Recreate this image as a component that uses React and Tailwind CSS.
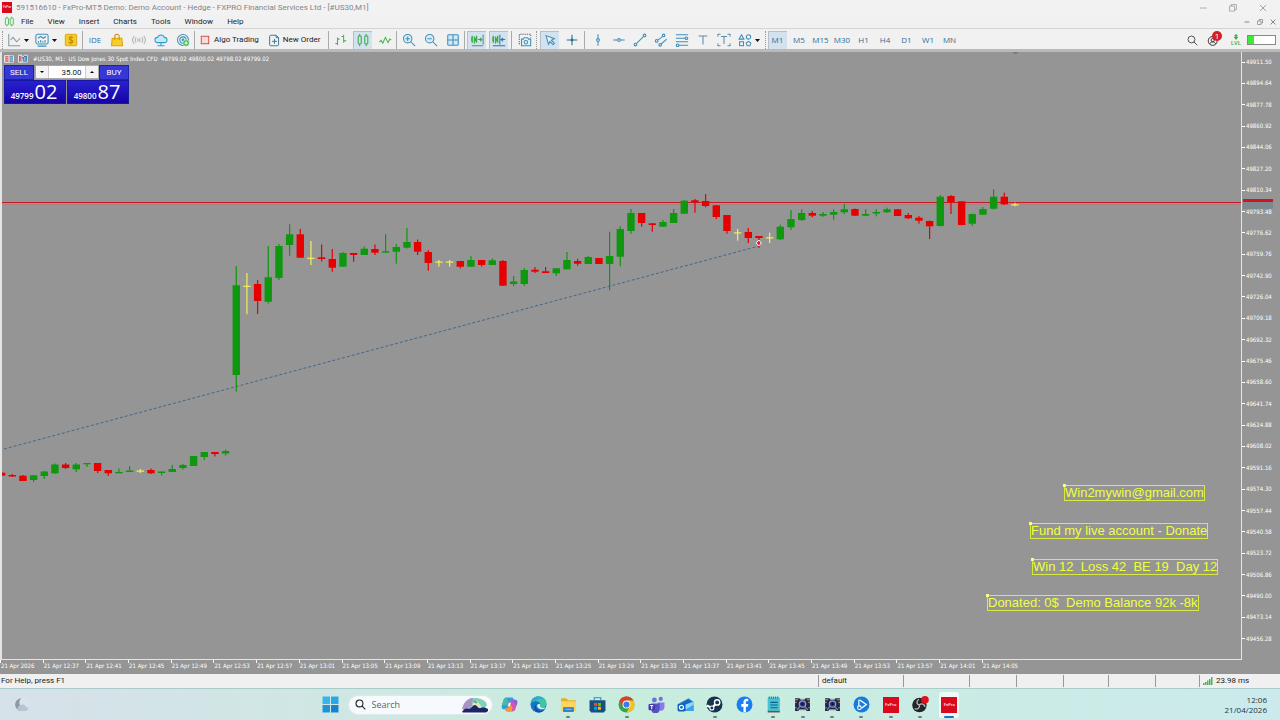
import React from "react";

const GREEN = "#0f970f";
const RED = "#e60000";
const YELLOW = "#efef5a";

// kind, high, body top, body bottom, low
const candles = [
  ["r", 472, 472.7, 475.7, 476], ["r", 474, 475, 476.5, 477], ["r", 475, 475.7, 481, 481],
  ["g", 475, 475.3, 480, 482], ["g", 471, 471.5, 476, 479], ["g", 463.5, 464.5, 473.3, 474],
  ["r", 463, 464.5, 468, 469], ["g", 463, 464.5, 469.3, 472], ["g", 463, 463, 464.3, 467],
  ["r", 463, 463, 471, 473], ["r", 470, 470, 473.3, 476], ["g", 468.5, 472, 473.3, 473],
  ["g", 466, 470.5, 472, 472], ["y", 469, 470.5, 471, 473], ["r", 468.5, 470, 473.3, 474],
  ["g", 471.5, 471.5, 473, 475.5], ["g", 465, 469, 472, 472], ["g", 464, 465, 468, 469.5],
  ["g", 456, 456, 466, 466], ["g", 452, 452, 457, 460], ["r", 452, 452, 454, 456.5],
  ["g", 449.5, 451, 453.5, 455.5], ["g", 266, 285.3, 375, 391.7], ["y", 273, 285.7, 286, 314.3],
  ["r", 280, 284, 301, 314], ["g", 246, 277.3, 301.7, 303.5], ["g", 244, 246, 278, 280],
  ["g", 224.3, 234.3, 245, 255.7], ["r", 229, 234.3, 257.7, 258], ["y", 241, 257.7, 258, 265],
  ["r", 244.5, 257.3, 259, 261.5], ["r", 249, 259, 267.7, 271.7], ["g", 252, 253, 266.7, 266.7],
  ["r", 253, 253, 255, 261.7], ["g", 246.5, 248.7, 255, 255], ["r", 244.5, 249, 252.7, 255],
  ["g", 234.3, 251.3, 252.7, 252.7], ["g", 244, 247, 251.7, 263.7], ["g", 228, 242, 247.7, 248.5],
  ["r", 239.5, 242, 251.7, 255], ["r", 250, 252, 263, 270.7], ["y", 260, 261.5, 262, 266.7],
  ["y", 260, 261.5, 262, 266.7], ["r", 261, 261, 266.7, 268.3], ["g", 256, 260, 266.7, 266.7],
  ["r", 260, 260, 265, 266.7], ["g", 258.5, 260.3, 265, 265], ["r", 260, 261, 285.7, 286],
  ["g", 276, 281.5, 284, 286], ["g", 268, 270, 284, 286], ["r", 267, 269.7, 271.7, 273],
  ["r", 267, 271.3, 273, 273], ["g", 268, 268.3, 273.3, 276], ["g", 252, 260, 269.3, 269.3],
  ["r", 258.7, 261, 263.7, 265.7], ["g", 256, 257, 264, 264], ["r", 258, 258, 264, 264],
  ["g", 231.7, 256, 264, 290.3], ["g", 226.3, 229, 256.7, 266.3], ["g", 209, 213, 231, 233.7],
  ["r", 213, 213, 223, 226.7], ["r", 223, 223.3, 225, 231.7], ["g", 220, 222, 226.7, 226.7],
  ["g", 209, 213, 223, 223], ["g", 200, 200.7, 213.7, 214], ["r", 199, 200.3, 202, 212.7],
  ["r", 194, 201, 206, 207.3], ["r", 205, 205.3, 217, 219], ["r", 215, 215, 231, 233.7],
  ["y", 229, 232.3, 233, 240.7], ["r", 228, 232, 238, 243], ["r", 236, 236, 238, 248],
  ["y", 232.7, 237.3, 238, 243], ["g", 224.7, 226.7, 239.3, 240], ["g", 210, 219, 227.3, 230],
  ["g", 209.3, 213, 220, 221], ["r", 211, 213, 215.7, 217.3], ["g", 212, 214, 215.7, 217],
  ["g", 209.3, 212, 214.7, 219.7], ["g", 204, 209.3, 212.3, 214], ["r", 208.5, 209, 215.7, 216],
  ["g", 209.3, 214, 215.7, 216], ["g", 209.3, 212, 213.5, 216.3], ["g", 207.7, 209.3, 212.3, 213],
  ["r", 209, 209.3, 216, 216], ["r", 213, 215, 218.3, 219], ["r", 216, 217.7, 220.7, 223.7],
  ["r", 220.5, 221, 226.3, 239], ["g", 195, 196.7, 226, 226.5], ["r", 195, 196, 202, 214],
  ["r", 201, 201.3, 225, 225.5], ["g", 213.5, 214, 223.7, 226], ["g", 207, 209, 214.7, 215],
  ["g", 189.3, 196.7, 208.7, 209.5], ["r", 192.7, 196.7, 204.3, 205], ["y", 202.7, 204.3, 205, 206.3],
];

const prices = Array.from({ length: 28 }, (_, i) => (49911.5 - i * 16.86).toFixed(2));
const times = Array.from({ length: 24 }, (_, i) => {
  if (i === 0) return "21 Apr 2026";
  const m = 12 * 60 + 33 + i * 4;
  return `21 Apr ${Math.floor(m / 60)}:${String(m % 60).padStart(2, "0")}`;
});

function Ic({ children, className = "h-[14px] w-[14px]", color = "#3f8fba" }) {
  return (
    <svg viewBox="0 0 16 16" fill="none" stroke={color} strokeWidth="1.2" className={`${className} shrink-0`} aria-hidden="true">
      {children}
    </svg>
  );
}

function Tool({ label, active, children }) {
  return (
    <button
      type="button"
      aria-label={label}
      className={`flex h-[18px] w-[19px] items-center justify-center ${active ? "bg-[#d3e2ee] shadow-[inset_1px_1px_0_#b4bfc8]" : ""}`}
    >
      {children}
    </button>
  );
}

function DropTool({ label, children }) {
  return (
    <button type="button" aria-label={label} className="flex h-[18px] w-[25px] items-center justify-center gap-[3px]">
      {children}
      <svg viewBox="0 0 5 3" className="h-[3px] w-[5px] shrink-0" aria-hidden="true"><path d="M0 0h5L2.5 3z" fill="#111" /></svg>
    </button>
  );
}

function Sep({ wide }) {
  return <div className={`flex justify-center ${wide ? "w-[7px]" : "w-[5px]"}`}><div className="h-[18px] w-px bg-[#aaa]" /></div>;
}

function Dots() {
  return <div className="flex w-[5px] justify-center"><div className="h-[18px] border-l border-dotted border-[#999]" /></div>;
}

function FxLogo({ className }) {
  return (
    <span className={`flex items-center justify-center bg-[#d90a1c] font-bold text-[#ffd5d8] ${className}`}>FxPro</span>
  );
}

function TitleBar() {
  return (
    <header className="flex h-[15px] items-center bg-[#f2f2f2] font-[Roboto,sans-serif] text-[8px] text-[#858585]">
      <FxLogo className="mx-[2px] h-[11px] w-[10px] text-[3px]" />
      <h1 className="ml-[2px] flex-1 whitespace-nowrap">591516610 - FxPro-MT5 Demo: Demo Account - Hedge - FXPRO Financial Services Ltd - [#US30,M1]</h1>
      <div className="flex gap-[20px] pr-[12px]">
        <button type="button" aria-label="Minimize"><Ic color="#999" className="h-[10px] w-[10px]"><path d="M3 8h11" /></Ic></button>
        <button type="button" aria-label="Restore"><Ic color="#999" className="h-[10px] w-[10px]"><path d="M2.500 5h8v8h-8zM5 5V2.500h8.500v8H10.500" /></Ic></button>
        <button type="button" aria-label="Close"><Ic color="#888" className="h-[10px] w-[10px]"><path d="M3 3l10 10M13 3L3 13" /></Ic></button>
      </div>
    </header>
  );
}

function MenuBar() {
  return (
    <nav className="flex h-[14px] items-center border-b border-[#d4d4d4] bg-[#f1f1f1] font-[Roboto,sans-serif] text-[8px] text-[#1c1c1c]">
      <Ic color="#3bb54a" className="ml-[4px] h-[11px] w-[11px]"><rect x="2" y="3" width="4.500" height="10" rx="1" /><rect x="9" y="3" width="4.500" height="10" rx="1" /><path d="M4.200 1v2M4.200 13v2M11.200 1v2M11.200 13v2" /></Ic>
      <div className="ml-[6px] flex flex-1 gap-[14px]">
        {["File", "View", "Insert", "Charts", "Tools", "Window", "Help"].map((m) => <button type="button" key={m}>{m}</button>)}
      </div>
      <div className="flex gap-[5px] pr-[3px]">
        <button type="button" aria-label="Minimize chart"><Ic color="#888" className="h-[8px] w-[8px]"><path d="M3 8h10" strokeWidth="2" /></Ic></button>
        <button type="button" aria-label="Restore chart"><Ic color="#888" className="h-[8px] w-[8px]"><path d="M3 6h7v7H3zM6 6V3h7v7h-3" strokeWidth="1.500" /></Ic></button>
        <button type="button" aria-label="Close chart"><Ic color="#666" className="h-[8px] w-[8px]"><path d="M3 3l10 10M13 3L3 13" strokeWidth="1.500" /></Ic></button>
      </div>
    </nav>
  );
}

function Toolbar() {
  return (
    <div className="flex h-[20px] items-center bg-[#f1f1f1] pt-[2px] text-[8px] text-[#222]">
      <Dots />
      <div className="flex w-[75px] justify-between">
        <DropTool label="Chart type"><Ic color="#8397a3"><path d="M2 1v13.500h13M4 8l3-3 4 5 4-4" /></Ic></DropTool>
        <DropTool label="Templates"><Ic><rect x="1" y="1.500" width="14" height="11" rx="2" /><path d="M3 15h10M3.500 6l3-2 3 2 3-2M4 9v2M6.500 8v3M9 9v2M11.500 8v3" /></Ic></DropTool>
        <Tool label="Market watch"><Ic color="#b98a00"><rect x="1.500" y="1.500" width="13" height="13" rx="1.500" fill="#f6c928" stroke="#e0ac10" /><path d="M10.500 5.500C9.500 4 5.500 4.300 5.800 6.500 6 8.500 10.300 7.500 10.300 9.800 10.300 12 6 12 5.300 10.300M8 3v10" /></Ic></Tool>
      </div>
      <Sep />
      <div className="flex w-[107px] items-center justify-between">
        <button type="button" className="w-[20px] text-[#2f6f98]">IDE</button>
        <Tool label="Market"><Ic><path d="M2.500 6h11l.8 8.500H1.700z" fill="#f7cd2e" stroke="#dba400" /><path d="M5.500 8V4a2.500 2.500 0 015 0v4" stroke="#c79308" /></Ic></Tool>
        <Tool label="Signals"><Ic color="#b5b5b5"><circle cx="8" cy="8" r="1.500" /><path d="M5 5a4 4 0 000 6M11 5a4 4 0 010 6M2.500 3.500a7 7 0 000 9M13.500 3.500a7 7 0 010 9" /></Ic></Tool>
        <Tool label="Virtual hosting"><Ic color="#2c9ccc"><path d="M4 11a3 3 0 01.2-6 4 4 0 017.600 0A3 3 0 0112 11zM8 11v3M4 14.500h8" fill="#c7eaf6" /></Ic></Tool>
        <Tool label="Community"><Ic><circle cx="8" cy="8" r="6.300" /><circle cx="8" cy="8" r="3.600" /><circle cx="8" cy="8" r="1" /><circle cx="11.500" cy="11.500" r="3.700" fill="#34bb4b" stroke="#fff" strokeWidth=".6" /><path d="M11.500 9.500v4M9.500 11.500h4" stroke="#fff" /></Ic></Tool>
      </div>
      <Sep />
      <div className="flex w-[129px] items-center gap-[9px] pl-[2px] font-[Roboto,sans-serif]">
        <button type="button" className="flex items-center gap-[3px] whitespace-nowrap"><Ic color="#cf4343" className="h-[12px] w-[12px]"><rect x="3" y="3" width="10" height="10" fill="#f8dada" /></Ic>Algo Trading</button>
        <button type="button" className="flex items-center gap-[2px] whitespace-nowrap"><Ic color="#3f7897" className="h-[13px] w-[13px]"><path d="M3 1.500h7l3 3v9l-1 1H3l-1-1v-11zM10 1.500v3h3M8 6v6M5 9h6" /></Ic>New Order</button>
      </div>
      <Sep />
      <div className="flex w-[63px] justify-between">
        <Tool label="Bars"><Ic color="#42b94f"><path d="M4 5v9M1.500 12H4M4 7h2.500M11 2v9M8.500 4H11M11 9h3" /></Ic></Tool>
        <Tool label="Candles" active><Ic color="#36ad46"><rect x="2.500" y="3.500" width="3.500" height="9" rx="1" /><rect x="10" y="3.500" width="3.500" height="9" rx="1" /><path d="M4.200 1v2.500M4.200 12.500V15M11.700 1v2.500M11.700 12.500V15" /></Ic></Tool>
        <Tool label="Line"><Ic color="#42b94f"><path d="M1.500 10.500l2-2 2 3L8.500 5l3 6 2-4 1.500 1" /></Ic></Tool>
      </div>
      <Sep />
      <div className="flex w-[63px] justify-between">
        <Tool label="Zoom in"><Ic><circle cx="6.500" cy="6.500" r="4.800" fill="#d8ecf6" /><path d="M10 10l5 5M6.500 4v5M4 6.500h5" /></Ic></Tool>
        <Tool label="Zoom out"><Ic><circle cx="6.500" cy="6.500" r="4.800" fill="#d8ecf6" /><path d="M10 10l5 5M4 6.500h5" /></Ic></Tool>
        <Tool label="Tile windows"><Ic><rect x="2" y="2" width="12" height="12" rx="1" fill="#d1e8f5" /><path d="M8 2v12M2 8h12" /></Ic></Tool>
      </div>
      <Sep />
      <div className="flex w-[41px] justify-between">
        <Tool label="Auto scroll" active><Ic color="#36ad46"><path d="M2.500 3v8M5 4v8M7.500 3v8M2 5v4M5.500 6v4M7 5v4" strokeWidth="1.500" /><path d="M9 7.500h4M11.500 5.500l2 2-2 2" /><path d="M15 2v11M2 14.500h13" stroke="#5289aa" /></Ic></Tool>
        <Tool label="Chart shift" active><Ic color="#36ad46"><path d="M1.500 3v8M4 4v8M6.500 3v8M1 5v4M4.500 6v4M6 5v4" strokeWidth="1.500" /><path d="M9 2v11M11 7.500h4M12.500 5.500l-2 2 2 2M1 14.500h14" stroke="#2f75a5" /></Ic></Tool>
      </div>
      <Sep wide />
      <Tool label="Screenshot"><Ic><path d="M1.500 13V1.500h13V5" strokeDasharray="1.500 1" stroke="#667" /><path d="M4 7h2l1-1.500h4L12 7h2.500v7.500H4z" fill="#e3f1f8" /><circle cx="9" cy="10.500" r="2" /></Ic></Tool>
      <Dots />
      <div className="flex w-[42px] justify-between pl-[1px]">
        <Tool label="Cursor" active><Ic><path d="M3.500 3l9.500 3.500-3.500 1.700 3.500 3.600-1.500 1.500-3.500-3.600L6.300 13z" fill="#e7f3fa" /></Ic></Tool>
        <Tool label="Crosshair"><Ic color="#286d93"><path d="M8 2v12M2 8h12" /><circle cx="8" cy="8" r="1" /></Ic></Tool>
      </div>
      <Sep wide />
      <div className="flex w-[146px] justify-between">
        <Tool label="Vertical line"><Ic><path d="M8 1.500v13" /><circle cx="8" cy="8" r="1.600" fill="#d8ecf6" /></Ic></Tool>
        <Tool label="Horizontal line"><Ic><path d="M1.500 8h13" /><circle cx="8" cy="8" r="1.600" fill="#d8ecf6" /></Ic></Tool>
        <Tool label="Trendline"><Ic><path d="M3 13L13 3" /><circle cx="2.800" cy="13.200" r="1.500" fill="#eee" /><circle cx="13.200" cy="2.800" r="1.500" fill="#eee" /></Ic></Tool>
        <Tool label="Channel"><Ic><path d="M2.500 9.500L11 3M6.500 14L14.500 7" /><circle cx="3" cy="9" r="1.500" fill="#eee" /><circle cx="11" cy="2.800" r="1.500" fill="#eee" /><circle cx="7" cy="13.500" r="1.500" fill="#eee" /></Ic></Tool>
        <Tool label="Fibonacci"><Ic><path d="M1 2h14M1 6h14M1 10h14M1 14h14" /><circle cx="13" cy="6" r="1.500" fill="#eee" /><circle cx="3" cy="14" r="1.500" fill="#eee" /></Ic></Tool>
        <Tool label="Text"><Ic color="#5f8ea6"><path d="M3 3.500h10M8 3.500V13" /></Ic></Tool>
        <Tool label="Text label"><Ic color="#5f8ea6"><path d="M4.500 4h7M8 4v8.500M1 4V1.500h3M12 1.500h3V4M1 12v2.500h3M15 12v2.500h-3" /></Ic></Tool>
      </div>
      <div className="flex w-[29px] justify-center"><DropTool label="Shapes"><Ic><path d="M4 2l2.800 5H1.200z" /><circle cx="12" cy="4.500" r="2.500" /><rect x="1.800" y="10" width="4.500" height="4.500" /><path d="M12 9.500l2.600 2-1 3h-3.200l-1-3z" /></Ic></DropTool></div>
      <Dots />
      <div className="flex w-[191px] justify-between text-[#2f6f98]">
        {["M1", "M5", "M15", "M30", "H1", "H4", "D1", "W1", "MN"].map((p) => (
          <button type="button" key={p} className={`flex h-[18px] w-[19px] items-center justify-center ${p === "M1" ? "bg-[#d3e2ee] shadow-[inset_1px_1px_0_#b4bfc8]" : ""}`}>{p}</button>
        ))}
      </div>
      <div className="ml-auto flex items-center gap-[9px] pr-[4px]">
        <button type="button" aria-label="Search"><Ic color="#333" className="h-[11px] w-[11px]"><circle cx="6.500" cy="6.500" r="5" /><path d="M10 10l5 5" /></Ic></button>
        <button type="button" aria-label="Account" className="relative">
          <Ic color="#333" className="h-[13px] w-[13px]"><circle cx="7" cy="8.500" r="5.500" /><circle cx="7" cy="7.500" r="2" /><path d="M3.500 12c1-3 6-3 7 0" /></Ic>
          <span className="absolute -top-[3px] left-[5px] flex h-[10px] w-[10px] items-center justify-center rounded-full bg-[#d32020] text-[8px] text-white">1</span>
        </button>
        <span className="flex w-[14px] flex-col items-center text-[6px] font-semibold leading-[6px] text-[#35b04a]">
          <svg viewBox="0 0 8 8" className="h-[6px] w-[6px]" aria-hidden="true"><path d="M4 0l3 3H5v1h2L4 8 1 4h2V3H1z" fill="#35b04a" /></svg>LVL
        </span>
        <span className="-ml-[5px] flex h-[10px] w-[29px] border border-[#888] bg-white"><span className="w-[6px] bg-[#3be83b]" /></span>
      </div>
    </div>
  );
}

function PlotDrawing() {
  return (
    <svg viewBox="2 52 1239 607" preserveAspectRatio="xMinYMin meet" className="absolute inset-0 h-full w-full" role="img" aria-label="US30 candlestick chart">
      <path d="M4 449L759 246" stroke="#41688c" strokeWidth="1" strokeDasharray="3 2" />
      <path d="M0 204.500H1241" stroke="#a88484" strokeWidth="1" />
      <path d="M0 202.500H1241" stroke="#c21d26" strokeWidth="1" />
      {candles.map(([k, hi, top, bot, lo], i) => {
        const x = 1.5 + i * 10.667;
        const c = k === "g" ? GREEN : k === "r" ? RED : YELLOW;
        const h = Math.max(bot - top, 1.2);
        return (
          <g key={i} fill={c}>
            <rect x={x - 0.5} y={hi} width="1.200" height={Math.max(lo - hi, 1)} />
            <rect x={x - 3.6} y={top} width="7.400" height={h} />
          </g>
        );
      })}
      <path d="M758.800 240l2.500 3-2.500 3-2.500-3z" fill="#e01616" stroke="#fff" />
      <path d="M1012 52h7l-3.500 2.500z" fill="#7b7b7b" />
    </svg>
  );
}

function OneClick() {
  const side = "h-[15px] w-[30px] border border-[#2020b0] bg-[#3737d6] font-[Roboto,sans-serif] text-[8px] text-white";
  const price = "flex h-[24px] w-[62px] items-end justify-center gap-px border border-[#1818a0] bg-linear-to-b from-[#2a1fd0] to-[#1503a4] pb-[3px] pr-[2px] text-white";
  return (
    <form className="relative ml-[2px] mt-[2px] flex w-[125px] flex-col" onSubmit={(e) => e.preventDefault()}>
      <div className="flex justify-between">
        <button type="button" className={side}>SELL</button>
        <div className="flex h-[14px] w-[64px] items-center border border-[#aaa] bg-white">
          <button type="button" aria-label="Decrease volume" className="flex h-full w-[12px] items-center justify-center bg-[#f4f4f4]"><svg viewBox="0 0 4 2" className="h-[2px] w-[4px]"><path d="M0 0h4L2 2z" /></svg></button>
          <input aria-label="Volume" defaultValue="35.00" className="h-full w-[38px] border-x border-[#ccc] pr-[3px] text-right font-[Roboto,sans-serif] text-[8px] text-[#222]" />
          <button type="button" aria-label="Increase volume" className="flex h-full w-[12px] items-center justify-center bg-[#f4f4f4]"><svg viewBox="0 0 4 2" className="h-[2px] w-[4px]"><path d="M0 2h4L2 0z" /></svg></button>
        </div>
        <button type="button" className={side}>BUY</button>
      </div>
      <div className="flex justify-between">
        <button type="button" className={price}><span className="text-[8px] font-semibold">49799</span><span className="text-[20px] leading-[16px]">02</span></button>
        <button type="button" className={price}><span className="text-[8px] font-semibold">49800</span><span className="text-[20px] leading-[16px]">87</span></button>
      </div>
    </form>
  );
}

const notes = [
  ["Win2mywin@gmail.com", "left-[1062px] top-[433px]"],
  ["Fund my live account - Donate", "left-[1028px] top-[471px]"],
  ["Win 12  Loss 42  BE 19  Day 12", "left-[1030px] top-[507px]"],
  ["Donated: 0$  Demo Balance 92k -8k", "left-[985px] top-[543px]"],
];

function Chart() {
  return (
    <main className="flex flex-1 flex-col border-t-3 border-[#b9b9b9] bg-[#959595] font-['DejaVu_Sans_Condensed','Open_Sans',sans-serif] text-[6px] text-white">
      <div className="flex flex-1">
        <section className="relative flex-1 border-b border-l-2 border-r border-[#e4e4e4]">
          <PlotDrawing />
          <div className="relative flex h-[11px] items-center pl-[2px] pt-[2px]">
            <Ic className="h-[10px] w-[10px]" color="#fff"><rect x="1" y="3" width="14" height="10" fill="#3b77b4" /><path d="M1 3h7v10H1z" fill="#c44" /><path d="M1 6.300h14M1 9.600h14" /></Ic>
            <Ic className="ml-[4px] h-[10px] w-[10px]" color="#fff"><path d="M1 2h5l2 3 2-3h5v11H1z" fill="#3b77b4" /><path d="M1 2h4v11H1z" fill="#c44" /><path d="M7.500 7v6M11 5v6" /></Ic>
            <span className="ml-[5px] whitespace-pre">#US30, M1:  US Dow Jones 30 Spot Index CFD  49799.02 49800.02 49798.02 49799.02</span>
          </div>
          <div className="font-['Open_Sans','Noto_Sans',sans-serif]"><OneClick /></div>
          {notes.map(([text, place]) => (
            <div key={text} className={`absolute h-[16px] whitespace-pre border border-[#d9ea3e] font-['Liberation_Sans',Arial,sans-serif] text-[13px] leading-[14px] text-[#eeff3c] ${place}`}>
              <span className="absolute -left-[2px] -top-[2px] h-[3px] w-[3px] bg-[#f4ff8a]" />
              {text}
            </div>
          ))}
        </section>
        <aside className="relative flex w-[38px] flex-col justify-between pb-[16px] pt-[5px]">
          {prices.map((p) => (
            <div key={p} className="flex h-[10px] items-center gap-px"><span className="h-px w-[3px] bg-white" />{p}</div>
          ))}
          <div className="absolute left-[1px] top-[147px] h-[10px] w-[30px] border-t-3 border-[#cc1620] bg-[#708090]/60" />
        </aside>
      </div>
      <div className="mr-[42px] grid h-[14px] grid-cols-29">
        {times.map((t) => <div key={t} className="relative whitespace-nowrap pl-px pt-[3px]"><span className="absolute left-0 top-0 h-[3px] w-px bg-white" />{t}</div>)}
      </div>
    </main>
  );
}

function StatusBar() {
  const cell = "h-[12px] border-l border-[#999]";
  return (
    <footer className="flex h-[15px] items-center border-b border-[#a9cccb] bg-[#f0f0f0] font-[Roboto,sans-serif] text-[8px] text-[#1b1b1b]">
      <span className="flex-1 pl-[1px]">For Help, press F1</span>
      <span className={`${cell} flex w-[85px] items-center pl-[3px]`}>default</span>
      <span className={`${cell} w-[66px]`} />
      <span className={`${cell} w-[47px]`} />
      <span className={`${cell} w-[47px]`} />
      <span className={`${cell} w-[45px]`} />
      <span className={`${cell} w-[47px]`} />
      <span className={`${cell} w-[44px]`} />
      <span className={`${cell} flex w-[81px] items-center gap-[3px] pl-[3px]`}>
        <svg viewBox="0 0 10 8" className="h-[8px] w-[10px]" aria-hidden="true"><path d="M0 6h1.500v2H0zM2 5h1.500v3H2zM4 3.500h1.500V8H4zM6 2h1.500v6H6zM8 0h1.500v8H8z" fill="#43b656" /></svg>
        23.98 ms
      </span>
    </footer>
  );
}

function TaskApp({ label, open, active, children }) {
  return (
    <button type="button" aria-label={label} className={`relative flex h-[26px] w-[20px] items-center justify-center rounded-[3px] ${active ? "bg-white/70" : ""}`}>
      {children}
      {open && <span className={`absolute bottom-0 h-[2px] rounded-full ${active ? "w-[10px] bg-[#1a72c4]" : "w-[4px] bg-[#6d7f86]"}`} />}
    </button>
  );
}

function P({ children }) {
  return <svg viewBox="0 0 16 16" className="h-[17px] w-[17px]" aria-hidden="true">{children}</svg>;
}

function Terminal() {
  return (
    <P>
      <path d="M1 2h4l1 1h4l1-1h4v12h-3l-1-1H5l-1 1H1z" fill="#232840" />
      <path d="M1 3.500h3M1 6h1.500M1 11h1.500M12 3.500h3M13.500 6H15M13.500 11H15M6 3.200h4M5 13h6" stroke="#b7986a" strokeWidth="1" />
      <circle cx="8" cy="7.500" r="3" fill="#2b3676" stroke="#8b9ae0" strokeWidth="1.200" />
      <path d="M3 13l3-4M10 10l3 3" stroke="#7988d6" strokeWidth="1.200" />
      <circle cx="8" cy="7.500" r="1.100" fill="#10152f" />
    </P>
  );
}

function Taskbar() {
  return (
    <nav className="grid h-[31px] grid-cols-[1fr_auto_1fr] items-center bg-linear-to-r from-[#d6e1ea] via-[#c8eddd] to-[#cceaec]">
      <button type="button" aria-label="Weather" className="ml-[13px] w-[17px]">
        <P><circle cx="8" cy="8" r="6" fill="#8d99a9" /><circle cx="11" cy="6" r="5" fill="#d8e3eb" /><path d="M7 14a2.500 2.500 0 010-5 3 3 0 015 1 2 2 0 010 4z" fill="#b8c4d0" /></P>
      </button>
      <div className="flex items-center">
        <button type="button" aria-label="Start" className="flex w-[20px] justify-center"><P><path d="M.5.5h7v7h-7z" fill="#37b5ea" /><path d="M8.500.5h7v7h-7z" fill="#2ba6e2" /><path d="M.5 8.500h7v7h-7z" fill="#1e93d8" /><path d="M8.500 8.500h7v7h-7z" fill="#1682cc" /></P></button>
        <label className="ml-[7px] flex h-[20px] w-[145px] items-center rounded-full border border-[#e0e8ee] bg-[#f6fafc] pl-[6px] pr-[3px]">
          <Ic color="#222" className="h-[11px] w-[11px]"><circle cx="6.500" cy="6.500" r="5" strokeWidth="1.600" /><path d="M10 10l5 5" strokeWidth="1.600" /></Ic>
          <input aria-label="Search" placeholder="Search" className="ml-[6px] w-0 flex-1 text-[9px] placeholder:text-[#606468]" />
          <svg viewBox="0 0 28 16" className="h-[16px] w-[28px]" aria-hidden="true">
            <path d="M4 7C7 1 11 1 14 1c5 0 11 2 12 7l-3 4H4z" fill="#7fd0bd" /><path d="M1 12C3 3 9 1 12 1l-1 7-4 6z" fill="#a993c4" /><path d="M11 7l5-3 5 6-5 2z" fill="#dfe6b8" /><path d="M13 4l3 2" stroke="#5c9c4d" strokeWidth="1.500" />
            <path d="M1 15c2-4 5-4 7-3 3-1 4-4 6-4s3 4 6 3c3-1 5 0 7 1v2l-2 1.500H2z" fill="#1c2566" />
          </svg>
        </label>
        <div className="ml-[7px] flex w-[460px] justify-between">
          <TaskApp label="Copilot"><P><path d="M5.500 1.500h4.700c1 0 1.300.6 1.600 1.500l.5 1.500H9.500L7.500 11c-.3 1-.7 1.500-2 1.500H2.800C1 12.500.3 11 .8 9.200l1.500-5.200c.5-1.700 1.500-2.500 3.200-2.500z" fill="#24a3dc" /><path d="M1 8.500L2.300 4C2.800 2.300 3.800 1.500 5.500 1.500L7 6 5.500 9z" fill="#4cb8a2" /><path d="M10.500 14.500H5.800c-1 0-1.300-.6-1.600-1.500l-.5-1.500h2.800L8.500 5c.3-1 .7-1.500 2-1.500h2.700c1.800 0 2.500 1.500 2 3.300L13.700 12c-.5 1.700-1.500 2.500-3.200 2.500z" fill="#d355b4" /><path d="M3.700 11.500h2.800L8 7l3 4-1 3.500H5.800c-1 0-1.300-.6-1.600-1.500z" fill="#f59a3c" /><path d="M9.500 3.500h3.700c1.800 0 2.500 1.500 2 3.300L14.500 9z" fill="#8a5fe0" /><path d="M7.300 6.300h2l-1 3.400h-2z" fill="#eef7fb" /></P></TaskApp>
          <TaskApp label="Edge"><P><circle cx="8" cy="8" r="7.500" fill="#1574c4" /><path d="M.6 7C1 3 4 .5 8 .5c4.500 0 7.500 3 7.500 6.500 0 2.500-2 4-4.500 4-1.500 0-2-.7-1.500-1.500C10.500 7 8 4.500 5 5 3 5.200 1.500 6 .6 7z" fill="#3ec6a4" /><path d="M.6 7C1 3 4 .5 8 .5c2 0 4 .8 5.500 2C9 2 6 3.500 5 5 3 5.200 1.500 6 .6 7z" fill="#2ba9d8" /><path d="M6 8c-1.500 3 1 6.500 5 6 1-.1 2-.5 3-1.500-1.500 2.500-4 3.200-6 3C4 15.300 3 9.500 6 8z" fill="#0d4f9c" /><path d="M6.500 9c.5-2 3.500-2 3.200-.2-.7 1.200.3 2.400 1.800 2.200 1.500.2 3-.3 3.700-1-1 3-8 4-8.700-1z" fill="#d5eef3" /></P></TaskApp>
          <TaskApp label="File Explorer" open><P><path d="M1 2h5l1.500 2H15v10H1z" fill="#e9ae23" /><path d="M1 5h14v9H1z" fill="#ffd65c" /><path d="M3 10.500h10V15H3z" fill="#2b7fcb" /><path d="M5 12.500h6" stroke="#8dc3ee" /></P></TaskApp>
          <TaskApp label="Store"><P><path d="M5 4V1.500h6V4" fill="none" stroke="#3ba7e0" strokeWidth="1.300" /><path d="M.5 4h15v9.500l-1.500 2H2l-1.500-2z" fill="#174f83" /><path d="M4.800 6.500h2.800v2.800H4.800z" fill="#f25022" /><path d="M8.400 6.500h2.800v2.800H8.400z" fill="#7fba00" /><path d="M4.800 10.100h2.800v2.800H4.800z" fill="#00a4ef" /><path d="M8.400 10.100h2.800v2.800H8.400z" fill="#ffb900" /></P></TaskApp>
          <TaskApp label="Chrome" open><P><circle cx="8" cy="8" r="7.500" fill="#34a34f" /><path d="M8 8L1.500 4.200A7.500 7.500 0 0114.500 4.200H8z" fill="#e33b2e" /><path d="M8 4.300h6.500A7.500 7.500 0 018 15.500l3.300-5.700z" fill="#fbc116" /><path d="M1.500 4.200l3.300 5.600L8 4.300z" fill="#e33b2e" /><circle cx="8" cy="8" r="3.700" fill="#fff" /><circle cx="8" cy="8" r="2.900" fill="#3b7de8" /></P></TaskApp>
          <TaskApp label="Teams"><P><circle cx="6" cy="3.800" r="2.300" fill="#6d72e0" /><circle cx="12" cy="2.800" r="2" fill="#7d6ed8" /><path d="M9 6h6.500v5a3.500 3.500 0 01-6.500 1z" fill="#8a7ae8" /><path d="M3 7h8v5a4 4 0 01-8 1z" fill="#5454c2" /><rect x=".5" y="7.500" width="6" height="6" rx="1" fill="#4438a8" /><path d="M2 9h3M3.500 9v3.500" stroke="#fff" /></P></TaskApp>
          <TaskApp label="Outlook"><P><path d="M2.500 6.500L11 2l4.500 3.500v8.500H5z" fill="#2b8fe3" /><path d="M4 6.500L10.500 3 14 5.500 6 9z" fill="#1a66bd" /><path d="M7 8.500l8.500-3v3L8 13z" fill="#8ed6f7" /><path d="M7 14l8.500-5.500V14z" fill="#3ba3ec" /><rect x=".5" y="7" width="7.500" height="7.500" rx="1.500" fill="#1260b8" /><circle cx="4.200" cy="10.700" r="1.900" fill="none" stroke="#fff" strokeWidth="1.100" /></P></TaskApp>
          <TaskApp label="Steam" open><P><circle cx="8" cy="8" r="7.500" fill="#17344f" /><path d="M.7 9l5 2.300L9 7.500" stroke="#fff" strokeWidth="2" fill="none" /><circle cx="10.500" cy="6" r="2.500" fill="#17344f" stroke="#fff" strokeWidth="1.300" /><circle cx="5.500" cy="11.300" r="1.900" fill="#17344f" stroke="#fff" /></P></TaskApp>
          <TaskApp label="Facebook"><P><circle cx="8" cy="8" r="7.500" fill="#1a7ef0" /><path d="M7 15.400V10H5V7.600h2V6c0-2.200 1.200-3.300 3.100-3.300l1.400.1v2.100h-1c-1 0-1.200.5-1.200 1.200v1.500h2.300L11.200 10H9.300v5.400z" fill="#fff" /></P></TaskApp>
          <TaskApp label="Notepad" open><P><rect x="2.500" y="1.500" width="11.500" height="13" rx="1" fill="#46c3d8" /><path d="M4 .5v2M6 .5v2M8 .5v2M10 .5v2M12 .5v2" stroke="#297c99" /><path d="M5 6h7M5 8.500h7M5 11h7" stroke="#17617f" /><path d="M2.500 14h11.500v1.500H2.500z" fill="#765338" /></P></TaskApp>
          <TaskApp label="Terminal one" open><Terminal /></TaskApp>
          <TaskApp label="Terminal two" open><Terminal /></TaskApp>
          <TaskApp label="Media" open><P><circle cx="8" cy="8" r="7.500" fill="#167bda" /><path d="M6 3.500L12.500 8 8 11.500" fill="none" stroke="#fff" strokeWidth="1.300" /><path d="M5.500 3.500V10" stroke="#d8eeff" strokeWidth="1.300" /><circle cx="6" cy="11" r="1.700" fill="#167bda" stroke="#fff" /></P></TaskApp>
          <TaskApp label="FxPro" open><FxLogo className="h-[16px] w-[16px] text-[4px]" /></TaskApp>
          <TaskApp label="OBS" open><P><circle cx="7" cy="8.500" r="6.800" fill="#252427" /><path d="M7 8.500C4 8 4 4.500 6.500 3M7 8.500c2-2.300 5-.5 5.200 1.800M7 8.500c.8 3-2.300 4.500-4.500 3.300" fill="none" stroke="#b9b9bd" strokeWidth="1.200" /><circle cx="12.200" cy="3.600" r="3.600" fill="#e2101c" /></P></TaskApp>
          <TaskApp label="FxPro MT5" open active><FxLogo className="h-[16px] w-[16px] text-[4px]" /></TaskApp>
        </div>
      </div>
      <div className="flex flex-col gap-px pr-[13px] text-right text-[8px] leading-[9px] text-[#25363b]"><time>12:06</time><time>21/04/2026</time></div>
    </nav>
  );
}

export default function App() {
  return (
    <div className="flex min-h-screen flex-col overflow-hidden font-['Open_Sans','Noto_Sans',sans-serif] leading-none">
      <TitleBar />
      <MenuBar />
      <Toolbar />
      <Chart />
      <StatusBar />
      <Taskbar />
    </div>
  );
}
